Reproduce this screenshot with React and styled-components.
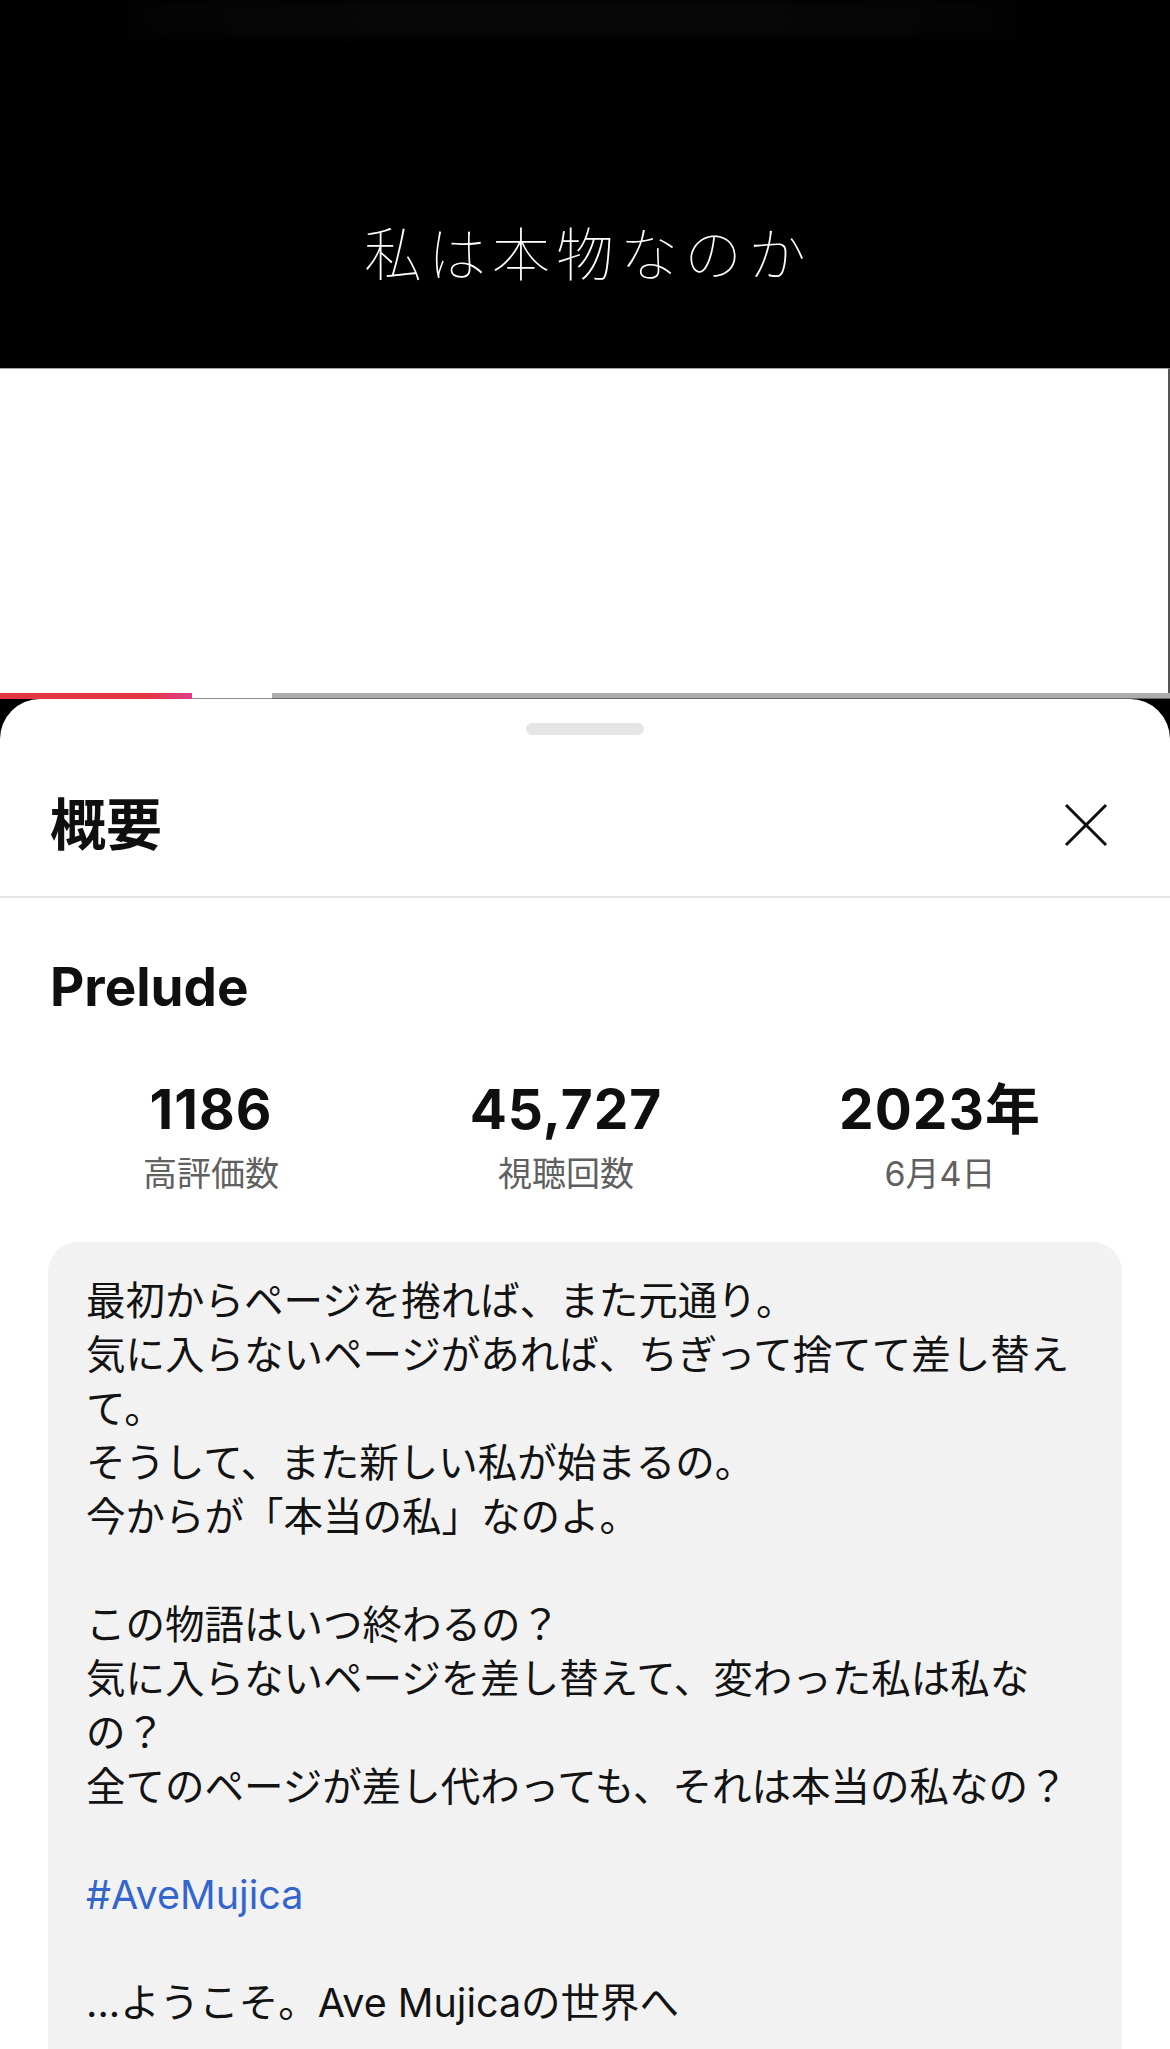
import React from "react";
import styled, { createGlobalStyle } from "styled-components";

const GlobalStyle = createGlobalStyle`
  html, body {
    margin: 0;
    padding: 0;
    background: #000;
    overflow: hidden;
  }
  body {
    font-family: "Inter", "Noto Sans CJK JP", sans-serif;
    -webkit-font-smoothing: antialiased;
  }
  * { box-sizing: border-box; }
`;

const Page = styled.div`
  width: 1170px;
  height: 2049px;
  overflow: hidden;
  display: flex;
  flex-direction: column;
  background: #000;
`;

const Video = styled.div`
  height: 368px;
  flex-shrink: 0;
  background: #000;
  display: flex;
  flex-direction: column;
  align-items: center;
`;

const VideoGlow = styled.div`
  align-self: stretch;
  height: 38px;
  margin: 0 155px 0 127px;
  background: linear-gradient(to right, #030303, #070707 30%, #070707 70%, #030303);
  filter: blur(5px);
`;

const Caption = styled.div`
  margin-top: 178px;
  color: #fff;
  font-family: "Noto Sans CJK JP", sans-serif;
  font-weight: 100;
  font-size: 58px;
  line-height: 70px;
  letter-spacing: 6px;
  padding-left: 6px;
`;

const PlayerSurface = styled.div`
  height: 325px;
  flex-shrink: 0;
  background: #fff;
  border-top: 1px solid #a3a3a3;
  border-right: 2px solid #555;
`;

const Progress = styled.div`
  display: flex;
  height: 6px;
  flex-shrink: 0;
  background: #fff;
`;

const Played = styled.div`
  width: 192px;
  background: linear-gradient(to right, #e43541 0%, #e43541 75%, #e03c86 100%);
`;

const Buffer = styled.div`
  width: 80px;
  background: #fff;
  border-bottom: 1px solid #8a8a8a;
`;

const Remaining = styled.div`
  flex: 1;
  background: #ababab;
  border-bottom: 1px solid #666;
`;

const Sheet = styled.div`
  flex: 1;
  background: #fff;
  border-radius: 40px 40px 0 0;
  display: flex;
  flex-direction: column;
  min-height: 0;
`;

const Handle = styled.div`
  width: 118px;
  height: 12px;
  border-radius: 6px;
  background: #e5e5e5;
  margin: 24px auto 0;
  flex-shrink: 0;
`;

const Header = styled.div`
  height: 161px;
  padding: 19px 62px 0 50px;
  display: flex;
  align-items: center;
  justify-content: space-between;
  flex-shrink: 0;
`;

const SheetTitle = styled.h1`
  margin: 0 0 8px;
  font-family: "Noto Sans CJK JP", sans-serif;
  font-weight: 700;
  font-size: 56px;
  line-height: 56px;
  color: #0f0f0f;
`;

const CloseButton = styled.button`
  width: 44px;
  height: 44px;
  padding: 0;
  border: 0;
  background: transparent;
  display: flex;
  align-items: center;
  justify-content: center;
  color: #0f0f0f;
`;

const Divider = styled.div`
  height: 2px;
  background: #e5e5e5;
  flex-shrink: 0;
`;

const VideoTitle = styled.h2`
  margin: 58px 0 0;
  padding: 0 50px;
  font-family: "Inter", sans-serif;
  font-weight: 700;
  font-size: 53px;
  line-height: 62px;
  color: #0f0f0f;
`;

const Stats = styled.div`
  margin-top: 60px;
  padding: 0 50px;
  display: grid;
  grid-template-columns: 322px 388px 360px;
  flex-shrink: 0;
`;

const Stat = styled.div`
  display: flex;
  flex-direction: column;
  align-items: center;
`;

const StatValue = styled.div`
  font-family: "Inter", "Noto Sans CJK JP", sans-serif;
  font-weight: 700;
  font-size: 55px;
  line-height: 62px;
  letter-spacing: 1px;
  color: #0f0f0f;
`;

const StatLabel = styled.div`
  margin-top: 12px;
  font-family: "Inter", "Noto Sans CJK JP", sans-serif;
  font-weight: 400;
  font-size: 34px;
  line-height: 44px;
  color: #606060;
`;

const DescriptionBox = styled.div`
  margin: 46px 48px 0;
  flex: 1;
  background: #f2f2f2;
  border-radius: 30px 30px 0 0;
  padding: 32px 34px 60px 38px;
  font-family: "Inter", "Noto Sans CJK JP", sans-serif;
  font-weight: 400;
  font-size: 39.5px;
  line-height: 54px;
  color: #131313;
  white-space: pre-wrap;
`;

const Hashtag = styled.a`
  color: #3465cc;
  text-decoration: none;
`;

const CloseIcon = () => (
  <svg width="44" height="44" viewBox="0 0 44 44" fill="none">
    <path d="M2 2 L42 42 M42 2 L2 42" stroke="currentColor" strokeWidth="3" />
  </svg>
);

const stats = [
  { value: "1186", label: "高評価数" },
  { value: "45,727", label: "視聴回数" },
  { value: "2023年", label: "6月4日" },
];

const part1 =
  "最初からページを捲れば、また元通り。\n気に入らないページがあれば、ちぎって捨てて差し替えて。\nそうして、また新しい私が始まるの。\n今からが「本当の私」なのよ。\n\nこの物語はいつ終わるの？\n気に入らないページを差し替えて、変わった私は私なの？\n全てのページが差し代わっても、それは本当の私なの？\n\n";
const part2 = "\n\n...ようこそ。Ave Mujicaの世界へ";

export default function App() {
  return (
    <>
      <GlobalStyle />
      <Page>
        <Video>
          <VideoGlow />
          <Caption>私は本物なのか</Caption>
        </Video>
        <PlayerSurface />
        <Progress>
          <Played />
          <Buffer />
          <Remaining />
        </Progress>
        <Sheet>
          <Handle />
          <Header>
            <SheetTitle>概要</SheetTitle>
            <CloseButton aria-label="閉じる">
              <CloseIcon />
            </CloseButton>
          </Header>
          <Divider />
          <VideoTitle>Prelude</VideoTitle>
          <Stats>
            {stats.map((s) => (
              <Stat key={s.label}>
                <StatValue>{s.value}</StatValue>
                <StatLabel>{s.label}</StatLabel>
              </Stat>
            ))}
          </Stats>
          <DescriptionBox>
            {part1}
            <Hashtag href="#">#AveMujica</Hashtag>
            {part2}
          </DescriptionBox>
        </Sheet>
      </Page>
    </>
  );
}
